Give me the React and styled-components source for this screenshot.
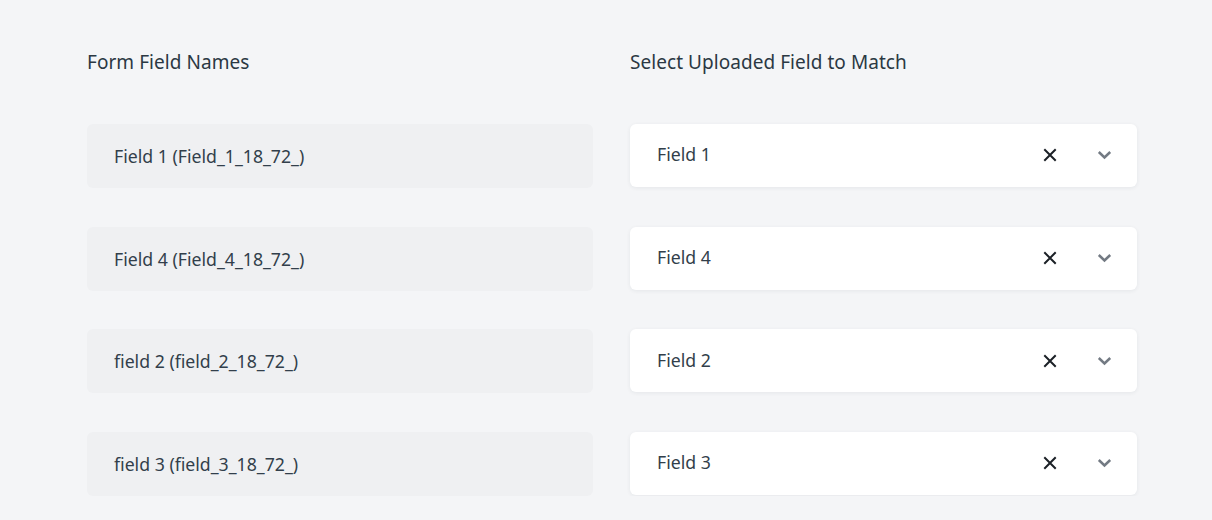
import React from 'react'
import styled, { createGlobalStyle } from 'styled-components'

const GlobalStyle = createGlobalStyle`
  body {
    margin: 0;
    background: #f4f5f7;
    font-family: 'Noto Sans', 'Open Sans', sans-serif;
    color: #2d3a45;
  }
`

const Page = styled.div`
  padding: 48px 75px 0 87px;
  display: grid;
  grid-template-columns: 506px 507px;
  column-gap: 37px;
  row-gap: 38.6px;
  align-items: start;
`

const Heading = styled.h3`
  margin: 0 0 9.4px;
  font-size: 19px;
  font-weight: 400;
  line-height: 28px;
  letter-spacing: 0.05px;
  color: #2b3843;
`

const NameBox = styled.div`
  height: 64px;
  box-sizing: border-box;
  padding: 0 27px;
  display: flex;
  align-items: center;
  background: #eff0f2;
  border-radius: 6px;
  font-size: 17.7px;
  color: #323f4b;
`

const SelectBox = styled.div`
  height: 63px;
  box-sizing: border-box;
  padding: 0 21px 0 27px;
  display: flex;
  align-items: center;
  background: #fff;
  border-radius: 6px;
  box-shadow: 0 1px 4px rgba(30, 40, 60, 0.07);
  font-size: 17.7px;
  color: #323f4b;
`

const Value = styled.span`
  flex: 1;
  margin-top: -2px;
`

const IconButton = styled.span`
  display: flex;
  align-items: center;
  justify-content: center;
  width: 24px;
  height: 24px;
  margin-left: ${p => p.gap || 0}px;
`

const Clear = () => (
  <svg width="14" height="14" viewBox="0 0 14 14">
    <path d="M2 2 L12 12 M12 2 L2 12" stroke="#1b2026" strokeWidth="2" strokeLinecap="square" />
  </svg>
)

const Chevron = () => (
  <svg width="15" height="10" viewBox="0 0 15 10">
    <path d="M1.8 2 L7.5 7.5 L13.2 2" stroke="#737a83" strokeWidth="2.5" fill="none" />
  </svg>
)

const rows = [
  { name: 'Field 1 (Field_1_18_72_)', value: 'Field 1' },
  { name: 'Field 4 (Field_4_18_72_)', value: 'Field 4' },
  { name: 'field 2 (field_2_18_72_)', value: 'Field 2' },
  { name: 'field 3 (field_3_18_72_)', value: 'Field 3' }
]

export default function App () {
  return (
    <>
      <GlobalStyle />
      <Page>
        <Heading>Form Field Names</Heading>
        <Heading>Select Uploaded Field to Match</Heading>
        {rows.map((row) => (
          <React.Fragment key={row.name}>
            <NameBox>{row.name}</NameBox>
            <SelectBox>
              <Value>{row.value}</Value>
              <IconButton>
                <Clear />
              </IconButton>
              <IconButton gap={30}>
                <Chevron />
              </IconButton>
            </SelectBox>
          </React.Fragment>
        ))}
      </Page>
    </>
  )
}
